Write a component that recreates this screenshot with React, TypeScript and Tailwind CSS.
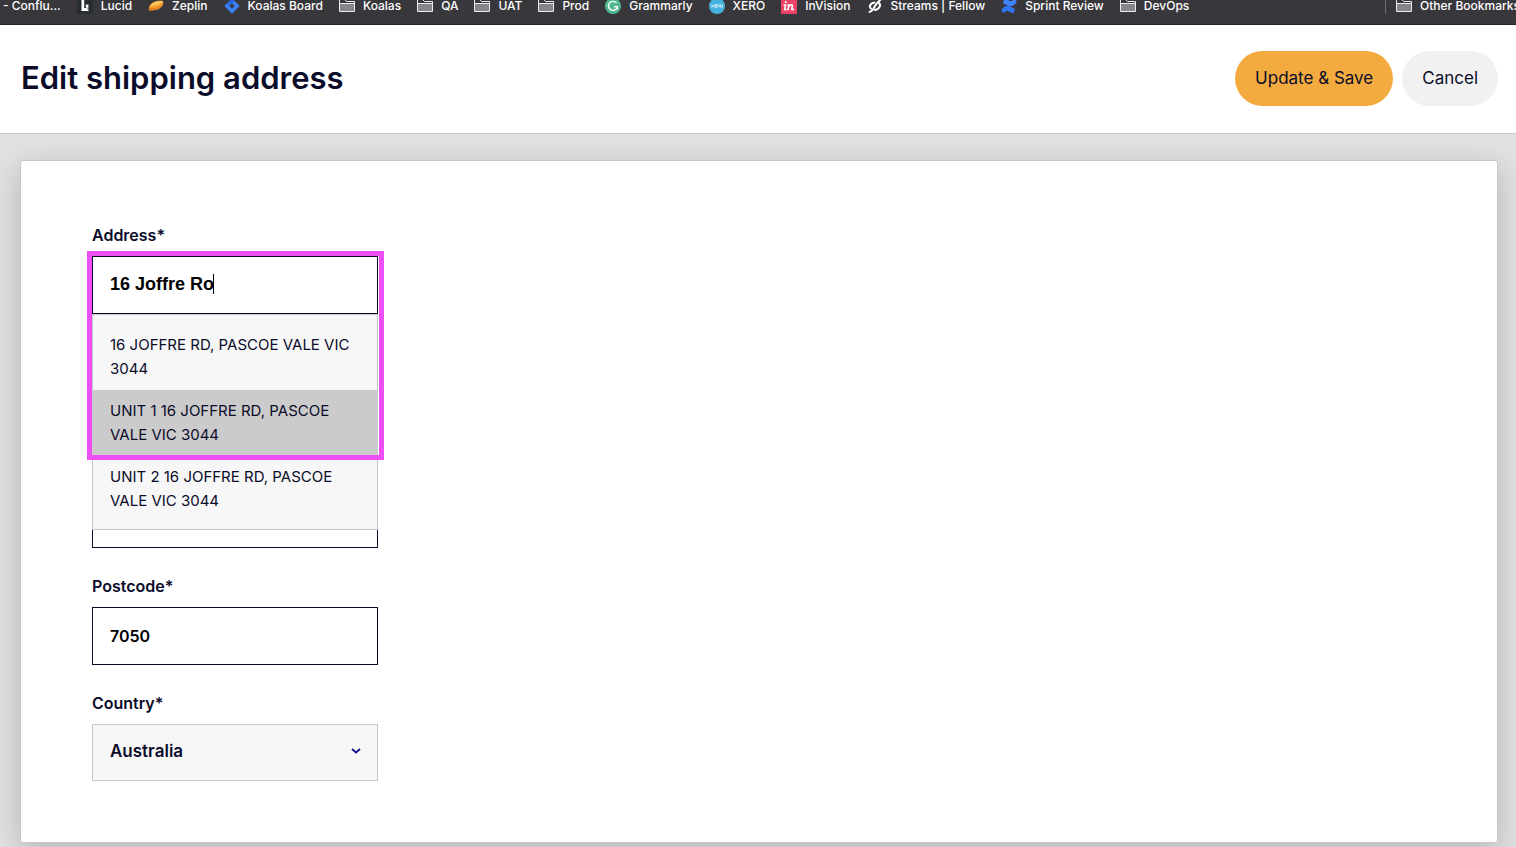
import { useState } from "react";
import type { ReactNode } from "react";
import { clsx } from "clsx";

function FolderIcon() {
  return (
    <svg width="16" height="16" viewBox="0 0 16 16" fill="none" className="shrink-0">
      <path d="M1 6H15V13H1Z" fill="#858588" />
      <path d="M.5 13.5V1.5H5.5L7.5 3.5H15.5V13.5Z" stroke="#ececee" />
      <path d="M.5 5.5H15.5" stroke="#ececee" />
    </svg>
  );
}

function LucidIcon() {
  return (
    <svg width="16" height="16" viewBox="0 0 16 16" className="shrink-0">
      <rect width="16" height="16" rx="1" fill="#282c33" />
      <path d="M4.5 1H7.2V10H9.5L12 13H4.5Z" fill="#fff" />
      <path d="M8.8 6.5H11.4V11.6L8.8 9.2Z" fill="#f2f3f4" />
    </svg>
  );
}

function ZeplinIcon() {
  return (
    <svg width="16" height="16" viewBox="0 0 16 16" className="shrink-0">
      <path d="M1 9.5L.5 13L5 12.5Z" fill="#c76a1e" />
      <path d="M1 9C2.5 4.5 8 1.8 15 3C16.2 7 12 11.8 5.5 12.2C2.5 12.2 .8 11 1 9Z" fill="#f7a331" />
      <path d="M2 7.5C5 4.2 9 2.5 15 3C13.5 5.8 8 8 2 7.5Z" fill="#fdc65a" />
      <path d="M1.2 10C6 10.5 11.5 9 15.2 5.5C14 9.5 9.5 12 5.5 12.2C3 12.2 1.5 11.5 1.2 10Z" fill="#e78325" />
    </svg>
  );
}

function JiraIcon() {
  return (
    <svg width="16" height="16" viewBox="0 0 16 16" className="shrink-0">
      <path d="M8 .3L15.7 8L8 15.7L.3 8Z" fill="#3d7ff5" />
      <path d="M8 5.4L10.6 8L8 10.6L5.4 8Z" fill="#35363a" />
      <path d="M8 .3L10.8 3L8 5.4L5.4 8L3.5 4.8Z" fill="#2563d8" />
    </svg>
  );
}

function GrammarlyIcon() {
  return (
    <svg width="16" height="16" viewBox="0 0 16 16" fill="none" className="shrink-0">
      <circle cx="8" cy="8" r="8" fill="#4fb88f" />
      <path d="M11.6 5.2A4.5 4.5 0 1 0 12.4 8.8H9.2M12.4 8.8V11.4" stroke="#fff" strokeWidth="1.4" />
    </svg>
  );
}

function XeroIcon() {
  return (
    <svg width="16" height="16" viewBox="0 0 16 16" fill="none" className="shrink-0">
      <circle cx="8" cy="8" r="8" fill="#45b1e0" />
      <path
        d="M2.2 6.5L4.8 9.5M4.8 6.5L2.2 9.5M5.8 8H8.6A1.4 1.5 0 1 0 8 9.3M9.7 9.6V7.4Q9.8 6.6 10.6 6.6"
        stroke="#fff"
        strokeWidth=".8"
      />
      <circle cx="12.4" cy="8" r="1.3" stroke="#fff" strokeWidth=".8" />
    </svg>
  );
}

function InVisionIcon() {
  return (
    <svg width="16" height="16" viewBox="0 0 16 16" fill="none" className="shrink-0">
      <rect width="16" height="16" fill="#ee4266" />
      <circle cx="4.8" cy="4" r="1.1" fill="#fff" />
      <path
        d="M2.6 7H4.6L3.6 11Q3.8 12.2 5.4 11.2M6.4 7H8L6.8 12.2M7.6 9Q9 6.6 10.6 6.8Q11.8 7.2 11.2 8.8L10.6 11Q10.8 12.2 13 11"
        stroke="#fff"
        strokeWidth="1.6"
      />
    </svg>
  );
}

function FellowIcon() {
  return (
    <svg width="16" height="16" viewBox="0 0 16 16" fill="none" strokeLinecap="round" className="shrink-0">
      <path d="M7.5 4.4Q3.6 5 2.8 8.2Q2.6 10 4.4 10.8" stroke="#fff" strokeWidth="2" />
      <path d="M11.8 4.8Q13.6 6 12.8 8.4Q11.8 11.4 7.8 12" stroke="#fff" strokeWidth="2" />
      <path d="M13.6 1.5L10.2 5Q7.6 8 6.6 10.4Q5.4 13 2.6 14" stroke="#fff" strokeWidth="2" />
    </svg>
  );
}

function ConfluenceIcon() {
  return (
    <svg width="16" height="16" viewBox="0 0 16 16" className="shrink-0">
      <path d="M.6 11.8Q4.3 5.8 9.8 8.8L14.2 11L12.2 15.5L7.4 13.2Q5 12 3.2 15L.4 13.2Z" fill="#2f75f0" />
      <path d="M15.4 4.2Q11.7 10.2 6.2 7.2L1.8 5L3.8 .5L8.6 2.8Q11 4 12.8 1L15.6 2.8Z" fill="#3f83fa" />
    </svg>
  );
}

const bookmarks: { name: string; icon: ReactNode }[] = [
  { name: "Lucid", icon: <LucidIcon /> },
  { name: "Zeplin", icon: <ZeplinIcon /> },
  { name: "Koalas Board", icon: <JiraIcon /> },
  { name: "Koalas", icon: <FolderIcon /> },
  { name: "QA", icon: <FolderIcon /> },
  { name: "UAT", icon: <FolderIcon /> },
  { name: "Prod", icon: <FolderIcon /> },
  { name: "Grammarly", icon: <GrammarlyIcon /> },
  { name: "XERO", icon: <XeroIcon /> },
  { name: "InVision", icon: <InVisionIcon /> },
  { name: "Streams | Fellow", icon: <FellowIcon /> },
  { name: "Sprint Review", icon: <ConfluenceIcon /> },
  { name: "DevOps", icon: <FolderIcon /> },
];

const suggestions = [
  "16 JOFFRE RD, PASCOE VALE VIC 3044",
  "UNIT 1 16 JOFFRE RD, PASCOE VALE VIC 3044",
  "UNIT 2 16 JOFFRE RD, PASCOE VALE VIC 3044",
];

const inputClass = "block h-[58px] w-full border border-[#0b0c2a] bg-white px-[17px] font-semibold text-black outline-none";

function BookmarksBar() {
  return (
    <nav className="h-[25px] overflow-hidden border-b border-[#242327] bg-[#38373b] font-['Inter',sans-serif] text-xs leading-3 font-medium text-white">
      <div className="flex h-3 items-center justify-between whitespace-nowrap">
        <div className="flex items-center gap-4 pl-[3px]">
          <a href="#">- Conflu...</a>
          {bookmarks.map((b) => (
            <a key={b.name} href="#" className="flex items-center gap-2">
              {b.icon}
              {b.name}
            </a>
          ))}
        </div>
        <div className="-mr-1 flex items-center gap-2.5">
          <span className="h-4 w-px bg-[#707074]" />
          <a href="#" className="flex items-center gap-2">
            <FolderIcon />
            Other Bookmarks
          </a>
        </div>
      </div>
    </nav>
  );
}

type FieldProps = { id: string; label: string; covered?: boolean; children: ReactNode };

function Field({ id, label, covered, children }: FieldProps) {
  return (
    <div>
      <label htmlFor={id} className={clsx("mb-[9px] block leading-6 font-semibold", covered && "invisible")}>
        {label}
      </label>
      {children}
    </div>
  );
}

export default function App() {
  const [address, setAddress] = useState("16 Joffre Ro");
  const [suburb, setSuburb] = useState("");
  const [state, setState] = useState("");
  const [postcode, setPostcode] = useState("7050");
  const [open, setOpen] = useState(true);
  const [active, setActive] = useState(1);

  const pick = (value: string) => {
    setAddress(value);
    setOpen(false);
  };

  return (
    <div className="flex min-h-screen flex-col bg-[#e1e1e1] font-['Inter',sans-serif] text-base text-[#0b0c2a]">
      <BookmarksBar />

      <header className="flex items-center justify-between border-b border-[#c8c8c8] bg-white pt-[26px] pr-[18px] pb-[27px] pl-[21px]">
        <h1 className="text-[31px] font-semibold">Edit shipping address</h1>
        <div className="flex gap-[9px] text-[17px]">
          <button type="submit" form="address-form" className="h-[55px] rounded-full bg-[#f3ab3f] px-5">
            Update &amp; Save
          </button>
          <button type="button" className="h-[55px] rounded-full bg-[#f1f1f1] px-5">
            Cancel
          </button>
        </div>
      </header>

      <main className="flex flex-1 flex-col pt-[26px] pr-[18px] pb-1 pl-5">
        <div className="flex-1 rounded-[3px] border border-[#c8c8c8] bg-white px-[71px] pt-[62px] pb-[61px] shadow-[0_8px_30px_rgba(0,0,0,0.2)]">
          <form id="address-form" className="flex w-[286px] flex-col gap-[26px]" onSubmit={(e) => e.preventDefault()}>
            <Field id="address" label="Address*">
              <div className="relative">
                <input
                  id="address"
                  value={address}
                  onChange={(e) => {
                    setAddress(e.target.value);
                    setOpen(true);
                  }}
                  className="block h-[58px] w-full border border-[#0b0c2a] bg-white px-[17px] pb-0.5 font-['Liberation_Sans',Arial,sans-serif] text-lg font-bold text-black outline-none"
                />

                {/* Address suggestions */}
                {open && (
                  <>
                    <span className="absolute top-[18px] left-[121px] h-5 w-px bg-black" />
                    <ul className="absolute top-full left-0 z-10 w-full border border-[#c8c8c8] bg-[#f7f7f7] pt-[9px] pb-[7px] text-[15px] leading-6">
                      {suggestions.map((s, i) => (
                        <li key={s} className={clsx("-mx-px", i === active && "bg-[#cbcbcb]")}>
                          <button
                            type="button"
                            onMouseEnter={() => setActive(i)}
                            onClick={() => pick(s)}
                            className="block w-full px-[18px] py-[9px] text-left"
                          >
                            {s}
                          </button>
                        </li>
                      ))}
                    </ul>
                    <div className="pointer-events-none absolute -top-[5px] -left-[5px] z-20 h-[209px] w-[297px] border-5 border-[#ee4ff5]" />
                  </>
                )}
              </div>
            </Field>

            <Field id="suburb" label="Suburb*" covered={open}>
              <input id="suburb" value={suburb} onChange={(e) => setSuburb(e.target.value)} className={inputClass} />
            </Field>

            <Field id="state" label="State*" covered={open}>
              <input id="state" value={state} onChange={(e) => setState(e.target.value)} className={inputClass} />
            </Field>

            <Field id="postcode" label="Postcode*">
              <input id="postcode" value={postcode} onChange={(e) => setPostcode(e.target.value)} className={inputClass} />
            </Field>

            <Field id="country" label="Country*">
              <div className="relative">
                <select
                  id="country"
                  className="block h-[57px] w-full appearance-none border border-[#c8c8c8] bg-[#f7f7f7] px-[17px] pb-0.5 text-[17px] font-semibold outline-none"
                >
                  <option>Australia</option>
                </select>
                <svg
                  width="10"
                  height="6"
                  viewBox="0 0 10 6"
                  fill="none"
                  className="pointer-events-none absolute top-6 right-[17px]"
                >
                  <path d="M1 1L5 4.5L9 1" stroke="#14108a" strokeWidth="1.8" />
                </svg>
              </div>
            </Field>
          </form>
        </div>
      </main>
    </div>
  );
}
